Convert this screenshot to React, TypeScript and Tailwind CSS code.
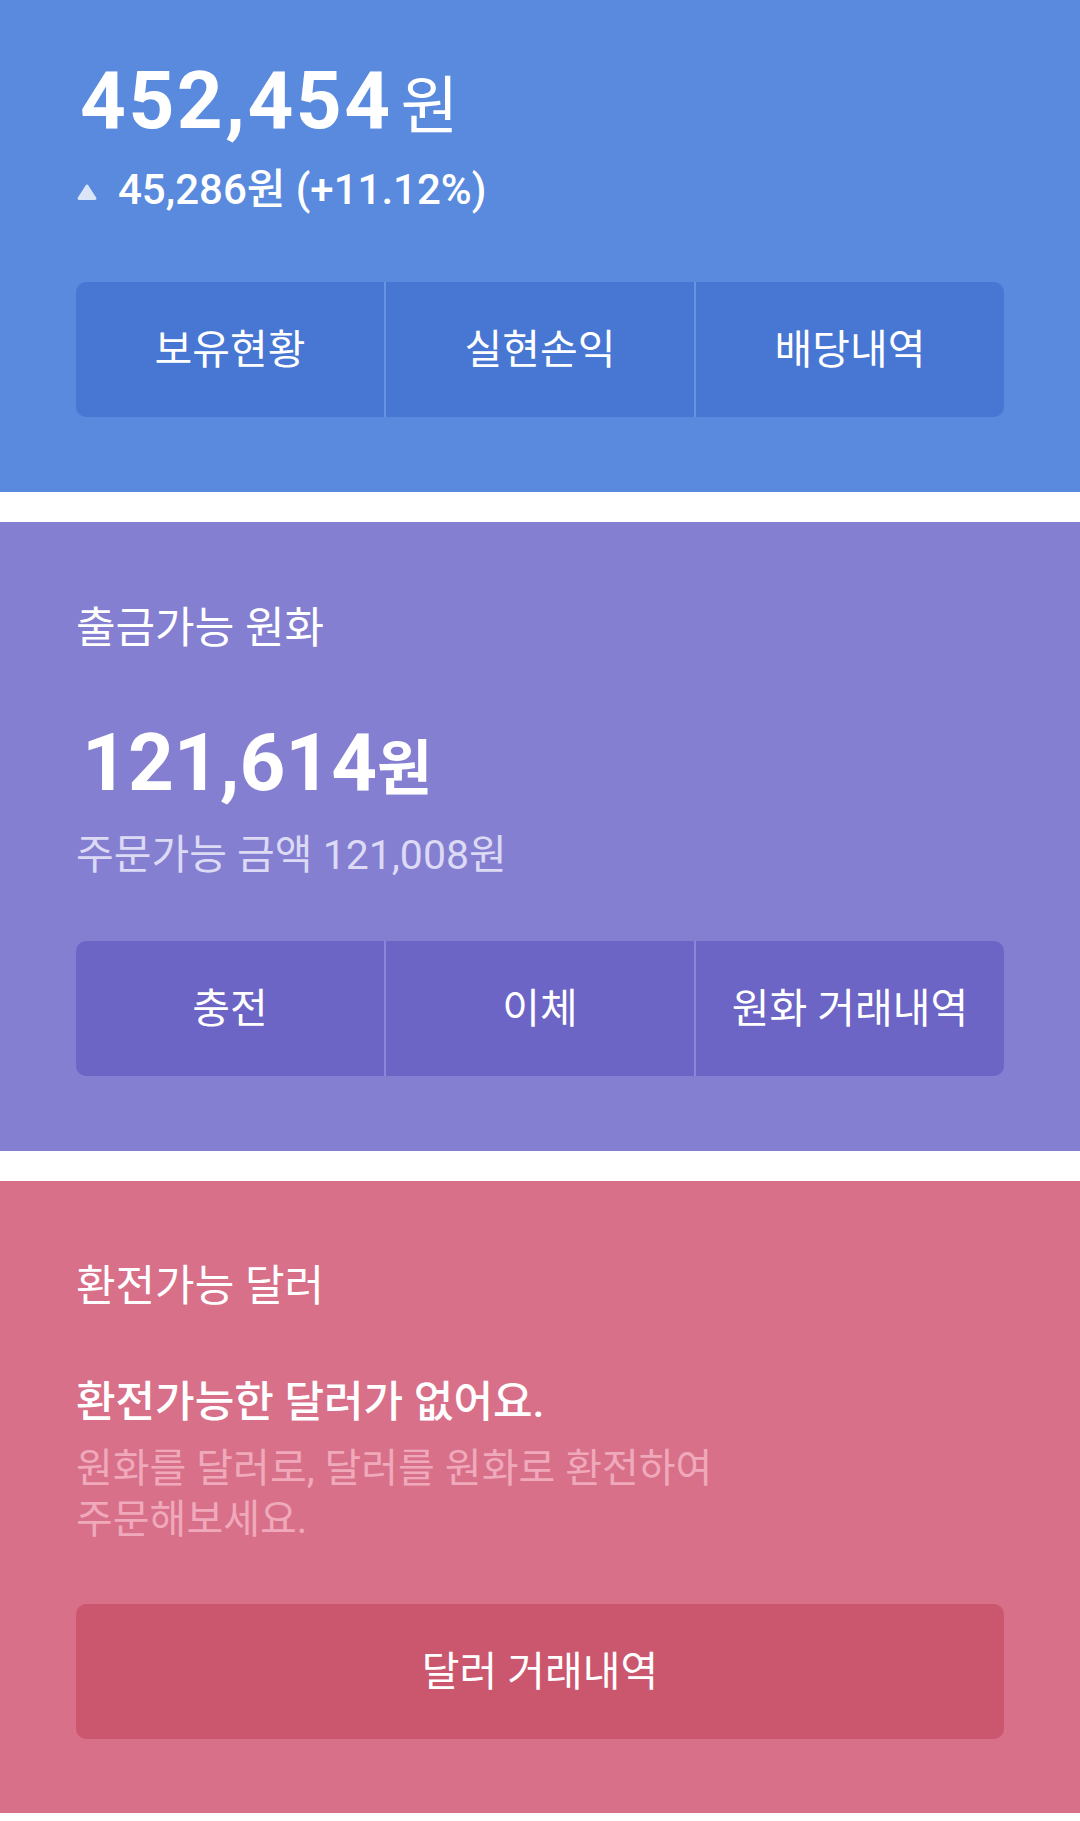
import type { ReactNode } from 'react';

type Tone = {
  bg: string;
  button: string;
  divider: string;
};

const BLUE: Tone = { bg: 'bg-[#5a8add]', button: 'bg-[#4776d3]', divider: 'border-[#6893e0]' };
const PURPLE: Tone = { bg: 'bg-[#857fd1]', button: 'bg-[#6c65c6]', divider: 'border-[#8c86d8]' };

function ButtonGroup({ labels, tone }: { labels: string[]; tone: Tone }) {
  return (
    <div className={`flex h-[135px] overflow-hidden rounded-[10px] ${tone.button}`}>
      {labels.map((label, i) => (
        <button
          key={label}
          className={`flex flex-1 items-center justify-center text-[41px] leading-[48px] text-white ${
            i > 0 ? `border-l-2 ${tone.divider}` : ''
          }`}
        >
          {label}
        </button>
      ))}
    </div>
  );
}

function Section({ className, children }: { className: string; children: ReactNode }) {
  return <section className={`px-[76px] ${className}`}>{children}</section>;
}

export default function App() {
  return (
    <div className="min-h-[1821px] bg-white font-[Roboto,'Noto_Sans_CJK_KR',sans-serif] text-white">
      <Section className={`${BLUE.bg} pt-[61px] pb-[75px]`}>
        <div className="pl-[4px] text-[80px] leading-[80px]">
          <span className="font-bold tracking-[2.5px]">452,454</span>
          <span className="ml-[8px] text-[63px] font-normal">원</span>
        </div>
        <div className="mt-[19px] flex items-center gap-[21px] text-[42px] leading-[48px] font-medium">
          <svg width="20" height="16" viewBox="0 0 20 16" className="mt-[3px] ml-[1px]">
            <path
              d="M8.6 1.4a1.6 1.6 0 0 1 2.8 0l7.7 12.2a1.5 1.5 0 0 1-1.3 2.4H2.2a1.5 1.5 0 0 1-1.3-2.4z"
              fill="#dbe5f8"
            />
          </svg>
          <span>45,286원 (+11.12%)</span>
        </div>
        <div className="mt-[68px]">
          <ButtonGroup labels={['보유현황', '실현손익', '배당내역']} tone={BLUE} />
        </div>
      </Section>

      <div className="h-[30px]" />

      <Section className={`${PURPLE.bg} pt-[82px] pb-[75px]`}>
        <h2 className="text-[43px] leading-[48px] font-normal">출금가능 원화</h2>
        <div className="mt-[71px] pl-[6px] text-[80px] leading-[80px] font-bold">
          <span>121,614</span>
          <span className="text-[60px]">원</span>
        </div>
        <p className="mt-[21px] text-[41px] leading-[48px] text-[#dcdaf5]">주문가능 금액 121,008원</p>
        <div className="mt-[62px]">
          <ButtonGroup labels={['충전', '이체', '원화 거래내역']} tone={PURPLE} />
        </div>
      </Section>

      <div className="h-[30px]" />

      <Section className="bg-[#d8708a] pt-[81px] pb-[74px]">
        <h2 className="text-[43px] leading-[48px] font-normal">환전가능 달러</h2>
        <p className="mt-[68px] text-[43px] leading-[48px] font-medium">환전가능한 달러가 없어요.</p>
        <p className="mt-[17px] text-[40px] leading-[51px] text-[#efa9bb]">
          원화를 달러로, 달러를 원화로 환전하여
          <br />
          주문해보세요.
        </p>
        <button className="mt-[59px] flex h-[135px] w-full items-center justify-center rounded-[10px] bg-[#cb576f] text-[41px] leading-[48px] text-white">
          달러 거래내역
        </button>
      </Section>
    </div>
  );
}
